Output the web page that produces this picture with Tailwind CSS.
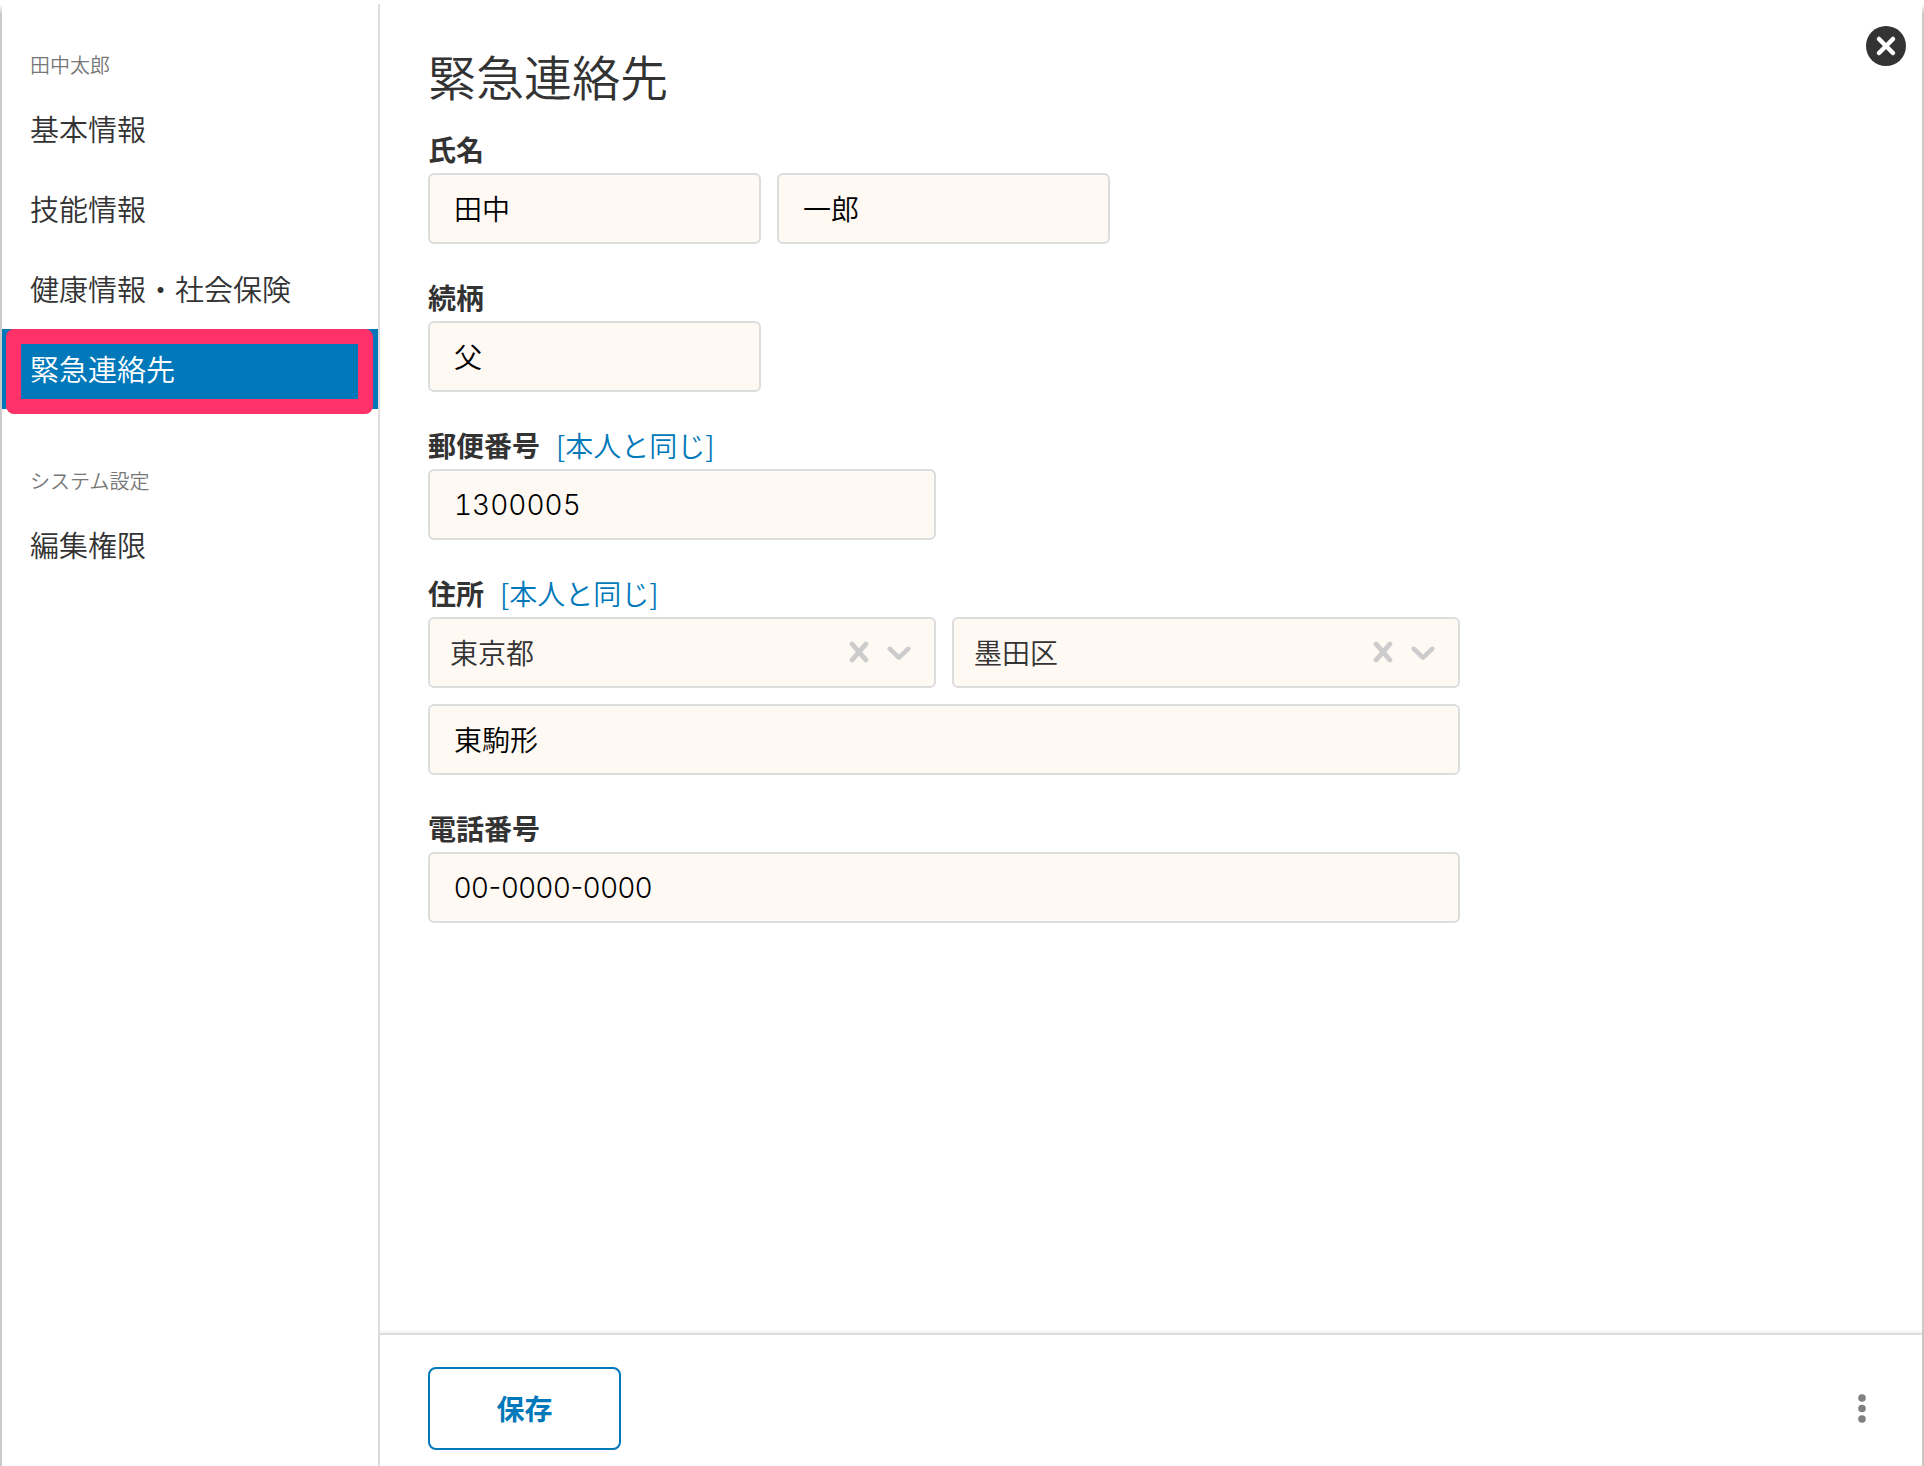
<!DOCTYPE html>
<html lang="ja">
<head>
<meta charset="utf-8">
<meta name="viewport" content="width=device-width, initial-scale=1">
<title>緊急連絡先</title>
<script src="https://cdn.jsdelivr.net/npm/@tailwindcss/browser@4"></script>
</head>
<body class="bg-white font-['Noto_Sans_CJK_JP',sans-serif] font-[350] text-[#333]">
<div class="min-h-screen bg-[linear-gradient(to_bottom,#fff_4px,#c9c9c9_14px)] px-[2px]">
  <div class="relative flex min-h-screen bg-white pt-1">

    <nav class="w-[378px] shrink-0 border-r-2 border-[#dedede] pt-[37px] text-[29px]">
      <h2 class="pl-7 text-[20px] leading-[48px] text-[#777]">田中太郎</h2>
      <ul class="leading-[78px]">
        <li><a href="#basic" class="block pb-[2px] pl-7">基本情報</a></li>
        <li><a href="#skill" class="block pb-[2px] pl-7">技能情報</a></li>
        <li><a href="#health" class="block pb-[2px] pl-7">健康情報・社会保険</a></li>
        <li class="relative">
          <a href="#emergency" aria-current="page" class="block bg-[#0078ba] pb-[2px] pl-7 text-white">緊急連絡先</a>
          <span class="pointer-events-none absolute top-0 left-1 h-[85px] w-[367px] rounded-lg border-[15px] border-[#ff3169]"></span>
        </li>
      </ul>
      <h2 class="mt-12 pl-7 text-[20px] leading-[48px] text-[#777]">システム設定</h2>
      <ul class="leading-[78px]">
        <li><a href="#permission" class="block pb-[2px] pl-7">編集権限</a></li>
      </ul>
    </nav>

    <form class="flex min-w-0 grow flex-col">
      <main class="grow px-12 pt-[39px] text-[28px]">
        <h1 class="mb-5 text-[48px] leading-[64px]">緊急連絡先</h1>

        <div class="flex max-w-[1032px] flex-col gap-[31px]">
          <div>
            <label for="last" class="block pb-[2px] leading-[44px] font-bold">氏名</label>
            <div class="flex gap-4">
              <input id="last" value="田中" class="h-[71px] w-[333px] rounded-md border-2 border-[#ddd] bg-[#fff9f3] px-6 pb-[2px] text-black">
              <input aria-label="名" value="一郎" class="h-[71px] w-[333px] rounded-md border-2 border-[#ddd] bg-[#fff9f3] px-6 pb-[2px] text-black">
            </div>
          </div>

          <div>
            <label for="relation" class="block pb-[2px] leading-[44px] font-bold">続柄</label>
            <input id="relation" value="父" class="block h-[71px] w-[333px] rounded-md border-2 border-[#ddd] bg-[#fff9f3] px-6 pb-[2px] text-black">
          </div>

          <div>
            <div class="flex gap-4 pb-[2px] leading-[44px]">
              <label for="zip" class="font-bold">郵便番号</label>
              <a href="#same-zip" class="text-[#0078ba]">[本人と同じ]</a>
            </div>
            <input id="zip" value="1300005" class="block h-[71px] w-[508px] rounded-md border-2 border-[#ddd] bg-[#fff9f3] px-6 font-[Inter,'Noto_Sans_CJK_JP',sans-serif] font-light text-black tabular-nums">
          </div>

          <div>
            <div class="flex gap-4 pb-[2px] leading-[44px]">
              <label for="pref" class="font-bold">住所</label>
              <a href="#same-address" class="text-[#0078ba]">[本人と同じ]</a>
            </div>
            <div class="grid grid-cols-2 gap-4">
              <div class="relative">
                <select id="pref" class="block h-[71px] w-full appearance-none rounded-md border-2 border-[#ddd] bg-[#fff9f3] px-5 pb-[2px]">
                  <option>東京都</option>
                </select>
                <div class="pointer-events-none absolute inset-y-0 right-[17px] flex items-center pb-[2px] text-[#ccc]">
                  <button type="button" aria-label="クリア" class="pointer-events-auto"><svg class="size-10" viewBox="0 0 20 20" fill="currentColor"><path d="M14.348 14.849c-0.469 0.469-1.229 0.469-1.697 0l-2.651-3.030-2.651 3.029c-0.469 0.469-1.229 0.469-1.697 0-0.469-0.469-0.469-1.229 0-1.697l2.758-3.15-2.759-3.152c-0.469-0.469-0.469-1.228 0-1.697s1.228-0.469 1.697 0l2.652 3.031 2.651-3.031c0.469-0.469 1.228-0.469 1.697 0s0.469 1.229 0 1.697l-2.758 3.152 2.758 3.15c0.469 0.469 0.469 1.229 0 1.698z"/></svg></button>
                  <svg class="size-10" viewBox="0 0 20 20" fill="currentColor"><path d="M4.516 7.548c0.436-0.446 1.043-0.481 1.576 0l3.908 3.747 3.908-3.747c0.533-0.481 1.141-0.446 1.574 0 0.436 0.445 0.408 1.197 0 1.615-0.406 0.418-4.695 4.502-4.695 4.502-0.217 0.223-0.502 0.335-0.787 0.335s-0.57-0.112-0.789-0.335c0 0-4.287-4.084-4.695-4.502s-0.436-1.17 0-1.615z"/></svg>
                </div>
              </div>
              <div class="relative">
                <select aria-label="市区町村" class="block h-[71px] w-full appearance-none rounded-md border-2 border-[#ddd] bg-[#fff9f3] px-5 pb-[2px]">
                  <option>墨田区</option>
                </select>
                <div class="pointer-events-none absolute inset-y-0 right-[17px] flex items-center pb-[2px] text-[#ccc]">
                  <button type="button" aria-label="クリア" class="pointer-events-auto"><svg class="size-10" viewBox="0 0 20 20" fill="currentColor"><path d="M14.348 14.849c-0.469 0.469-1.229 0.469-1.697 0l-2.651-3.030-2.651 3.029c-0.469 0.469-1.229 0.469-1.697 0-0.469-0.469-0.469-1.229 0-1.697l2.758-3.15-2.759-3.152c-0.469-0.469-0.469-1.228 0-1.697s1.228-0.469 1.697 0l2.652 3.031 2.651-3.031c0.469-0.469 1.228-0.469 1.697 0s0.469 1.229 0 1.697l-2.758 3.152 2.758 3.15c0.469 0.469 0.469 1.229 0 1.698z"/></svg></button>
                  <svg class="size-10" viewBox="0 0 20 20" fill="currentColor"><path d="M4.516 7.548c0.436-0.446 1.043-0.481 1.576 0l3.908 3.747 3.908-3.747c0.533-0.481 1.141-0.446 1.574 0 0.436 0.445 0.408 1.197 0 1.615-0.406 0.418-4.695 4.502-4.695 4.502-0.217 0.223-0.502 0.335-0.787 0.335s-0.57-0.112-0.789-0.335c0 0-4.287-4.084-4.695-4.502s-0.436-1.17 0-1.615z"/></svg>
                </div>
              </div>
              <input aria-label="町名・番地" value="東駒形" class="col-span-2 h-[71px] rounded-md border-2 border-[#ddd] bg-[#fff9f3] px-6 pb-[2px] text-black">
            </div>
          </div>

          <div>
            <label for="tel" class="block pb-[2px] leading-[44px] font-bold">電話番号</label>
            <input id="tel" type="tel" value="00-0000-0000" class="block h-[71px] w-full rounded-md border-2 border-[#ddd] bg-[#fff9f3] px-6 font-[Inter,'Noto_Sans_CJK_JP',sans-serif] font-light text-black">
          </div>
        </div>
      </main>

      <footer class="flex items-center justify-between border-t-2 border-[#dedede] pt-8 pr-12 pb-4 pl-12 shadow-[0_-2px_3px_rgba(0,0,0,0.06)]">
        <button type="submit" class="h-[83px] w-[193px] rounded-lg border-2 border-[#0078ba] pb-[2px] text-[28px] font-bold text-[#0078ba]">保存</button>
        <button type="button" aria-label="メニュー" class="h-10 w-6"><svg class="h-10 w-6" viewBox="0 0 24 40" fill="#808080"><circle cx="12" cy="9" r="3.800"/><circle cx="12" cy="19.500" r="3.800"/><circle cx="12" cy="30" r="3.800"/></svg></button>
      </footer>
    </form>

    <button type="button" aria-label="閉じる" class="absolute top-[26px] right-4"><svg class="size-10" viewBox="0 0 40 40"><circle cx="20" cy="20" r="20" fill="#333"/><path d="M13 13l14 14M27 13L13 27" stroke="#fff" stroke-width="4.500" stroke-linecap="round"/></svg></button>
  </div>
</div>
</body>
</html>
